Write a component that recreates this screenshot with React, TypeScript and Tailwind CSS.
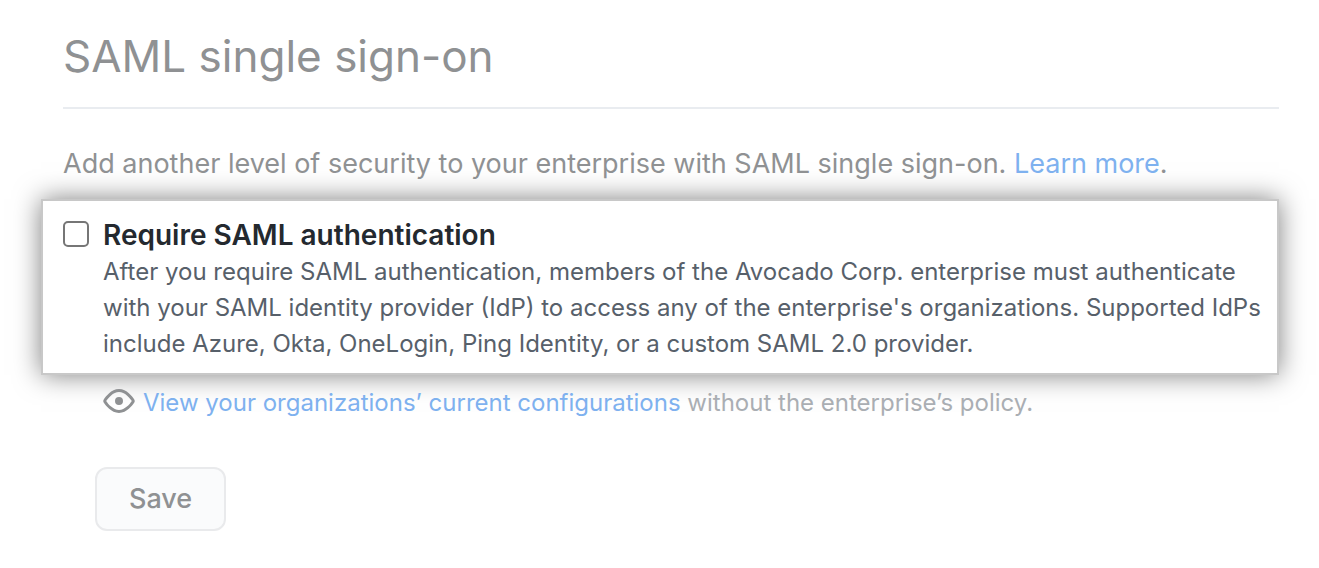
export default function App() {
  return (
    <main className="min-h-screen bg-white pb-8 pl-[41px] pr-10 font-[Inter,sans-serif] text-[#8f9193]">
      <header className="ml-[22px] border-b-2 border-[#e9ecf0] pb-[23px] pt-7">
        <h1 className="text-[44px] leading-[56px]">SAML single sign-on</h1>
      </header>
      <p className="ml-[22px] mt-[37px] text-[27px] leading-9">
        Add another level of security to your enterprise with SAML single sign-on.{" "}
        <a href="#learn" className="text-[#7eb1ef]">Learn more</a>.
      </p>
      <section className="mt-[17px] flex gap-[14px] border-2 border-[#c8c8c8] bg-white pb-[11px] pl-5 pt-4 shadow-[0_0_25px_rgba(0,0,0,0.5)]">
        <input id="require-saml" type="checkbox" aria-describedby="saml-description" className="mt-1 size-[26px] shrink-0 appearance-none rounded-[5px] border-2 border-[#767676] bg-white checked:bg-[#0969da]" />
        <div>
          <label htmlFor="require-saml" className="block text-[28px] font-semibold leading-[37px] text-[#24292f]">Require SAML authentication</label>
          <p id="saml-description" className="text-[24px] leading-9 text-[#57606a]">
            After you require SAML authentication, members of the Avocado Corp. enterprise must authenticate with your SAML identity provider (IdP) to access any of the enterprise's organizations. Supported IdPs include Azure, Okta, OneLogin, Ping Identity, or a custom SAML 2.0 provider.
          </p>
        </div>
      </section>
      <p className="ml-[62px] mt-[10px] flex items-center gap-2 text-[24px] leading-9 text-[#aaaeb3]">
        <svg viewBox="0 0 16 16" className="-mt-1 size-8 shrink-0 fill-[#8f9193]" aria-hidden="true">
          <path fillRule="evenodd" d="M1.679 7.932c.412-.621 1.242-1.75 2.366-2.717C5.175 4.242 6.527 3.5 8 3.5c1.473 0 2.824.742 3.955 1.715 1.124.967 1.954 2.096 2.366 2.717a.119.119 0 010 .136c-.412.621-1.242 1.75-2.366 2.717C10.825 11.758 9.473 12.5 8 12.5c-1.473 0-2.824-.742-3.955-1.715C2.92 9.818 2.09 8.69 1.679 8.068a.119.119 0 010-.136zM8 2c-1.981 0-3.67.992-4.933 2.078C1.797 5.169.88 6.423.43 7.1a1.619 1.619 0 000 1.798c.45.678 1.367 1.932 2.637 3.024C4.329 13.008 6.019 14 8 14c1.981 0 3.67-.992 4.933-2.078 1.27-1.091 2.187-2.345 2.637-3.023a1.619 1.619 0 000-1.798c-.45-.678-1.367-1.932-2.637-3.023C11.671 2.992 9.981 2 8 2zm0 8a2 2 0 100-4 2 2 0 000 4z" />
        </svg>
        <span><a href="#configurations" className="text-[#7eb1ef]">View your organizations’ current configurations</a> without the enterprise’s policy.</span>
      </p>
      <button type="button" className="ml-[54px] mt-[46px] h-16 rounded-xl border-2 border-[#e9eaec] bg-[#fafbfc] px-8 text-[27px] font-medium leading-9">Save</button>
    </main>
  );
}
